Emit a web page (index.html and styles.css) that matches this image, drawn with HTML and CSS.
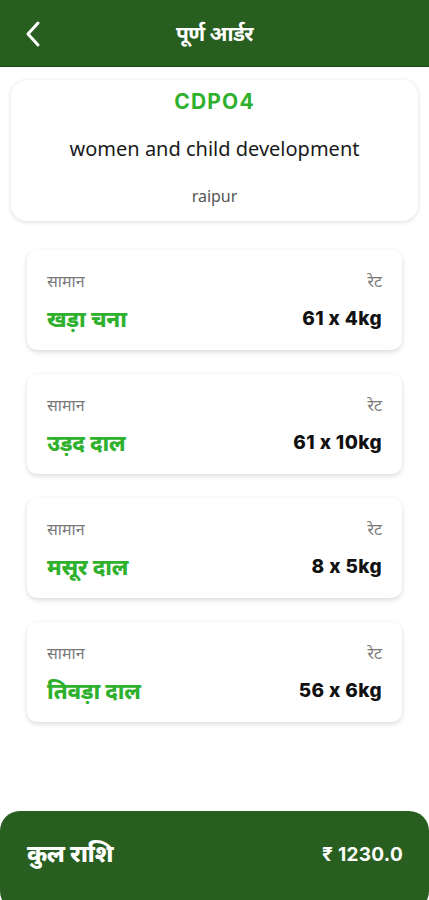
FILE: index.html
```html
<!DOCTYPE html>
<html lang="hi">
<head>
<meta charset="utf-8">
<title>पूर्ण आर्डर</title>
<link rel="stylesheet" href="styles.css">
</head>
<body>
<header class="topbar">
  <button class="back" aria-label="back">
    <svg width="18" height="28" viewBox="0 0 18 28"><path d="M14 3 L4 14 L14 25" fill="none" stroke="#fff" stroke-width="3" stroke-linecap="round" stroke-linejoin="round"/></svg>
  </button>
  <h1 class="title">पूर्ण आर्डर</h1>
</header>
<main class="content">
  <section class="office">
    <div class="code">CDPO4</div>
    <div class="dept">women and child development</div>
    <div class="city">raipur</div>
  </section>
  <div class="items">
    <div class="item">
      <div class="row labels"><span>सामान</span><span>रेट</span></div>
      <div class="row vals"><span class="name">खड़ा चना</span><span class="qty">61 x 4kg</span></div>
    </div>
    <div class="item">
      <div class="row labels"><span>सामान</span><span>रेट</span></div>
      <div class="row vals"><span class="name">उड़द दाल</span><span class="qty">61 x 10kg</span></div>
    </div>
    <div class="item">
      <div class="row labels"><span>सामान</span><span>रेट</span></div>
      <div class="row vals"><span class="name">मसूर दाल</span><span class="qty">8 x 5kg</span></div>
    </div>
    <div class="item">
      <div class="row labels"><span>सामान</span><span>रेट</span></div>
      <div class="row vals"><span class="name">तिवड़ा दाल</span><span class="qty">56 x 6kg</span></div>
    </div>
  </div>
</main>
<footer class="total">
  <span class="tlabel">कुल राशि</span>
  <span class="tval">₹ 1230.0</span>
</footer>
</body>
</html>
```
FILE: styles.css
```css
* { box-sizing: border-box; }
html, body { margin: 0; padding: 0; }
body {
  width: 429px;
  height: 900px;
  background: #fff;
  font-family: "Noto Sans", "Open Sans", sans-serif;
  position: relative;
  overflow: hidden;
}
.topbar {
  height: 67px;
  background: #285e1f;
  border-bottom: 1px solid #1d4716;
  display: flex;
  align-items: center;
  justify-content: center;
  position: relative;
}
.back {
  position: absolute;
  left: 24px;
  top: 20px;
  background: none;
  border: 0;
  padding: 0;
  width: 18px;
  height: 28px;
  display: flex;
  align-items: center;
  justify-content: center;
}
.title {
  margin: 0;
  color: #fff;
  font-size: 21px;
  font-weight: 700;
  letter-spacing: -0.6px;
}
.content {
  padding: 13px 11px 0;
}
.office {
  background: #fff;
  border-radius: 16px;
  box-shadow: 0 1px 5px rgba(0,0,0,0.14);
  height: 141px;
  display: flex;
  flex-direction: column;
  align-items: center;
  padding-top: 8px;
}
.code {
  color: #2fb12e;
  font-family: Inter, sans-serif;
  font-weight: 700;
  font-size: 21px;
  line-height: 28px;
  letter-spacing: 1.2px;
}
.dept {
  color: #1a1a1a;
  font-size: 20px;
  line-height: 26px;
  margin-top: 20px;
}
.city {
  color: #555;
  font-size: 16px;
  line-height: 20px;
  margin-top: 24px;
}
.items {
  display: flex;
  flex-direction: column;
  gap: 24px;
  padding: 29px 16px 0;
}
.item {
  height: 100px;
  background: #fff;
  border-radius: 10px;
  box-shadow: 0 2px 5px rgba(0,0,0,0.15);
  padding: 20px 20px 0;
}
.row {
  display: flex;
  justify-content: space-between;
  align-items: center;
}
.labels {
  color: #7a7a7a;
  font-size: 16px;
  line-height: 22px;
}
.vals {
  margin-top: 13px;
  align-items: flex-start;
}
.name {
  color: #2fb12e;
  font-size: 22px;
  font-weight: 800;
  line-height: 26px;
  letter-spacing: -0.3px;
}
.qty {
  color: #111;
  font-family: Inter, sans-serif;
  font-feature-settings: "calt" 0;
  font-weight: 800;
  font-size: 19px;
  line-height: 28px;
  letter-spacing: 0.4px;
}
.total {
  position: absolute;
  left: 0;
  right: 0;
  top: 811px;
  height: 100px;
  background: #285e1f;
  border-radius: 20px;
  display: flex;
  justify-content: space-between;
  align-items: flex-start;
  padding: 26px 26px 0 27px;
  color: #fff;
}
.tlabel {
  font-size: 24px;
  font-weight: 800;
  letter-spacing: -0.6px;
  line-height: 32px;
}
.tval {
  font-family: Inter, sans-serif;
  font-feature-settings: "calt" 0;
  font-size: 19px;
  font-weight: 700;
  line-height: 32px;
  letter-spacing: 0.3px;
  margin-top: 2px;
}
```
